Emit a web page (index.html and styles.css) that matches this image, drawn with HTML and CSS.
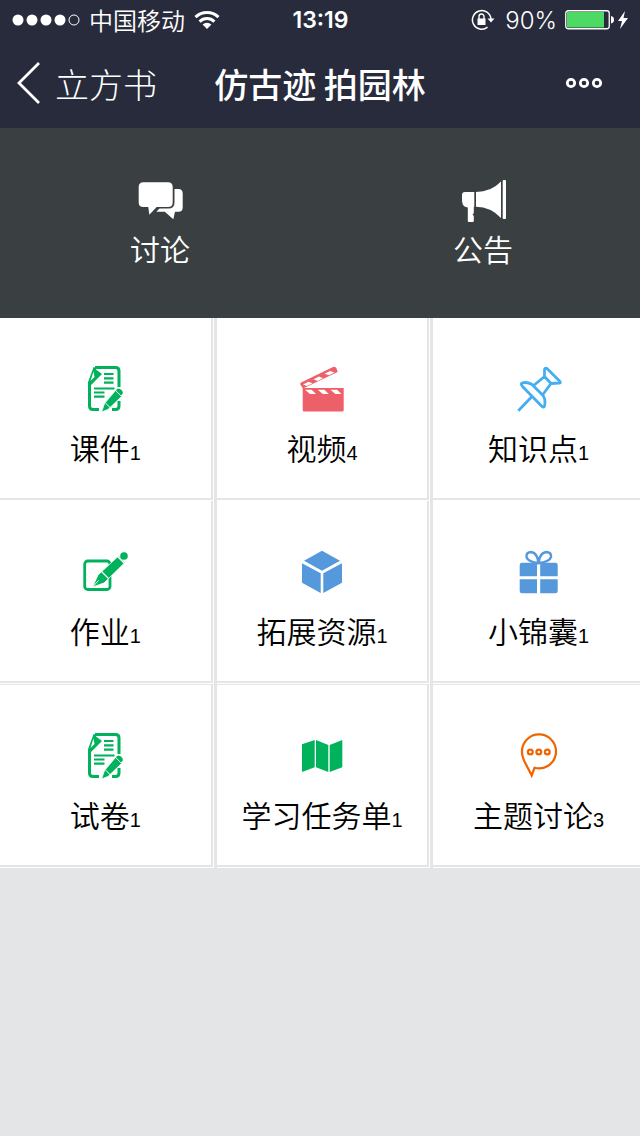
FILE: index.html
```html
<!DOCTYPE html>
<html lang="zh-CN">
<head>
<meta charset="utf-8">
<meta name="viewport" content="width=device-width, initial-scale=1">
<title>仿古迹 拍园林</title>
<link rel="stylesheet" href="styles.css">
</head>
<body>
<header class="top">
  <div class="status">
    <div class="status-left">
      <svg class="signal" width="68" height="12" viewBox="0 0 68 12" fill="#fff"><circle cx="6" cy="6" r="5.5"/><circle cx="20" cy="6" r="5.5"/><circle cx="34" cy="6" r="5.5"/><circle cx="48" cy="6" r="5.5"/><circle cx="62" cy="6" r="5" fill="none" stroke="#fff"/></svg>
      <span class="carrier">中国移动</span>
      <svg width="26" height="20" viewBox="0 0 26 20" fill="none" stroke="#fff" stroke-width="3"><path d="M1.500 7.200a16.500 16.500 0 0 1 23 0"/><path d="M5.600 11.600a10.500 10.500 0 0 1 14.800 0"/><path d="M13 19l-4.400-4.600a6.400 6.400 0 0 1 8.800 0z" fill="#fff" stroke="none"/></svg>
    </div>
    <time class="clock">13:19</time>
    <div class="status-right">
      <svg width="24" height="22" viewBox="0 0 24 22"><path d="M16.500 18.200A9.300 9.300 0 1 1 20 10" fill="none" stroke="#fff" stroke-width="1.500"/><path d="M16.500 9.500h7l-3.500 4z" fill="#fff"/><path d="M6.500 9.500h8v6.500h-8z" fill="#fff"/><path d="M8 10V7.500a2.500 2.500 0 0 1 5 0V10" fill="none" stroke="#fff" stroke-width="1.400"/></svg>
      <span class="percent">90%</span>
      <svg class="battery" width="50" height="20" viewBox="0 0 50 20"><rect x=".75" y=".75" width="43.500" height="18" rx="2.500" fill="none" stroke="#fff" stroke-width="1.300"/><rect x="2" y="2" width="37" height="15.500" fill="#4cd964"/><path d="M46 6q3 .5 3 3.800t-3 3.700z" fill="#fff"/></svg>
      <svg class="bolt" width="12" height="20" viewBox="0 0 12 20"><path d="M8 1L1 11h4L3 19l8-11H6.500z" fill="#fff"/></svg>
    </div>
  </div>
  <nav class="nav">
    <a class="back" href="#"><svg width="24" height="42" viewBox="0 0 24 42"><path d="M23 1L3 21l20 20" fill="none" stroke="#fff" stroke-width="2.800"/></svg><span>立方书</span></a>
    <h1 class="title">仿古迹 拍园林</h1>
    <button class="more" type="button" aria-label="更多"><svg width="38" height="12" viewBox="0 0 38 12" fill="none" stroke="#fff" stroke-width="2.800"><circle cx="6" cy="6" r="3.700"/><circle cx="19" cy="6" r="3.700"/><circle cx="32" cy="6" r="3.700"/></svg></button>
  </nav>
</header>
<main class="main">
  <section class="hero">
    <a class="hero-item" href="#">
      <svg class="icon" viewBox="0 0 48 48" fill="#fff"><path d="M7.500 6.300h24.500q4.700 0 4.700 4.700v15.500q0 4.500-4.700 4.500H20.700l-7.400 7.700-1-7.700H7.500q-4.800 0-4.800-4.500V11q0-4.700 4.800-4.700z"/><path d="M38.500 13h4q4.200 0 4.200 4.500v14q0 4.200-4.200 4.200h-3.500l-1.700 7.600-8.500-7.600h-8.500l3.200-3.200h9q6 0 6-6z"/></svg>
      <span>讨论</span>
    </a>
    <a class="hero-item" href="#">
      <svg class="icon" viewBox="0 0 48 48" fill="#fff"><path d="M6 16h9.300v14.700h-.5V37l-1.200 1.500 1.200 1.500v5q0 1-1 1h-4q-1 0-1-1V31.500L6 30.700Q3 29 3 24v-5q0-3 3-3z"/><path d="M17 16q15 0 25-10.500v36.500Q32 31 17 30.700z"/><rect x="43.700" y="4" width="3.300" height="39" rx="1"/></svg>
      <span>公告</span>
    </a>
  </section>
  <ul class="grid">
    <li class="cell"><a class="tile" href="#">
      <svg class="icon green" viewBox="0 0 48 48"><path d="M14 2.500h20.500q3.500 0 3.500 3.500v16M38 36v5q0 3.500-3.500 3.500H31M18 44.500h-6q-3.500 0-3.500-3.500V17.500L14 2.500" fill="none" stroke="currentColor" stroke-width="3"/><path d="M13 3l8 6L8 22V17l1.500-1 3-8z"/><path d="M12.500 6.500l-3 9.500 4-4z" fill="#fff"/><path d="M23 9h9.500M23 13.300h9.500M23 17.600h9.500M13 23.500h20.500M13 27.500h10.500M13 31.600h10.500" stroke="currentColor" stroke-width="2.200"/><path d="M34.500 25.500l6 6-13.500 13-6.500 2.500 3-8.500z" stroke="#fff" stroke-width=".8"/><path d="M36 24q2-1.500 4.500 1t.5 4.500l-1 1-5-5z"/><path d="M24.500 38l5 5" stroke="#fff"/></svg>
      <span class="label">课件<small>1</small></span></a></li>
    <li class="cell"><a class="tile" href="#">
      <svg class="icon red" viewBox="0 0 48 48"><path d="M4.700 23h41v22q0 1.500-1.500 1.500h-38q-1.500 0-1.500-1.500z"/><path d="M2 19l1-1.500L35 2q2.500-1 3.500 1.500l1.200 3.500L5 23.500z"/><path d="M7 24.700h6.700l4.300 4.300h-6zM19.700 24.700h6.700l4.300 4.300h-6zM32.400 24.700h6.700L43.400 29h-6zM5 19.500l5.500-2.700 4 1.500-5.500 2.700zM15.500 14.300l5.500-2.700 4 1.600-5.500 2.700zM26.500 8.700L32 6l4.500 1.600-5.500 2.700z" fill="#fff"/></svg>
      <span class="label">视频<small>4</small></span></a></li>
    <li class="cell"><a class="tile" href="#">
      <svg class="icon sky" viewBox="0 0 48 48" fill="none" stroke="currentColor" stroke-width="2.800" stroke-linejoin="round"><path d="M32 3.500L45 16.500q1 1.500-1 1.500l-8 .5-6.500-7V4.500q.5-2 2.500-1zM29.500 11.500L18 21M36 18.500L27.500 30M7 18q5-1.500 10 1.500L28 30.500q3 4 1.500 10.500-.5 2-2.500.500L7.500 21.500Q5.500 19 7 18zM17 31.500L3.300 45.700"/></svg>
      <span class="label">知识点<small>1</small></span></a></li>
    <li class="cell"><a class="tile" href="#">
      <svg class="icon green" viewBox="0 0 48 48"><rect x="3.700" y="13" width="25.300" height="28.500" rx="3" fill="none" stroke="currentColor" stroke-width="2.800"/><path d="M37.500 8l6.500 6.500-21 20.500-11.500 4 5.500-12z" stroke="#fff" stroke-width=".8"/><path d="M12.500 38l5-5.500" stroke="#fff"/><path d="M20.500 23.500l7 7M36.500 8.500l7 7" stroke="#fff" stroke-width="1.200"/><circle cx="43" cy="8" r="3.800"/></svg>
      <span class="label">作业<small>1</small></span></a></li>
    <li class="cell"><a class="tile" href="#">
      <svg class="icon blue" viewBox="0 0 48 48"><path d="M24 2.700l18 10-18 10-18-10zM4 15.300l18.700 10V45L4 34.700zM44 15.300l-18.700 10V45L44 34.700z"/></svg>
      <span class="label">拓展资源<small>1</small></span></a></li>
    <li class="cell"><a class="tile" href="#">
      <svg class="icon blue" viewBox="0 0 48 48"><path d="M7 14.700h15v13.600H4.700V17q0-2.300 2.300-2.300zM25.200 14.700h15q2.500 0 2.500 2.300v11.300H25.200zM4.700 31.300H22V45.200H7q-2.300 0-2.300-2.300zM25.200 31.300h17.500v11.600q0 2.300-2.500 2.300h-15z"/><path d="M23.500 15q-1-10-7-11-5.500 0-5 5 1.500 5 12 6zM23.500 15q1-10 7.500-11 5.500 0 5 5-1.500 5-12.500 6z" fill="none" stroke="currentColor" stroke-width="2.600"/></svg>
      <span class="label">小锦囊<small>1</small></span></a></li>
    <li class="cell ruled"><a class="tile" href="#">
      <svg class="icon green" viewBox="0 0 48 48"><path d="M14 2.500h20.500q3.500 0 3.500 3.500v16M38 36v5q0 3.500-3.500 3.500H31M18 44.500h-6q-3.500 0-3.500-3.500V17.500L14 2.500" fill="none" stroke="currentColor" stroke-width="3"/><path d="M13 3l8 6L8 22V17l1.500-1 3-8z"/><path d="M12.500 6.500l-3 9.500 4-4z" fill="#fff"/><path d="M23 9h9.500M23 13.300h9.500M23 17.600h9.500M13 23.500h20.500M13 27.500h10.500M13 31.600h10.500" stroke="currentColor" stroke-width="2.200"/><path d="M34.500 25.500l6 6-13.500 13-6.500 2.500 3-8.500z" stroke="#fff" stroke-width=".8"/><path d="M36 24q2-1.500 4.500 1t.5 4.500l-1 1-5-5z"/><path d="M24.500 38l5 5" stroke="#fff"/></svg>
      <span class="label">试卷<small>1</small></span></a></li>
    <li class="cell ruled"><a class="tile" href="#">
      <svg class="icon green" viewBox="0 0 48 48"><path d="M4 12.300L16.700 8v27.300L4 40zM18 8l12.300 5v27L18 35.300zM31.700 13l12.600-5v27.300L31.700 40z"/></svg>
      <span class="label">学习任务单<small>1</small></span></a></li>
    <li class="cell ruled"><a class="tile" href="#">
      <svg class="icon orange" viewBox="0 0 48 48" fill="none" stroke="currentColor" stroke-width="2.200"><path d="M16.700 43.500L9 28.500Q7 24 7 20a17 17 0 1 1 12.500 15.800z"/><circle cx="15.300" cy="20" r="2.400"/><circle cx="23.800" cy="20" r="2.400"/><circle cx="32.300" cy="20" r="2.400"/></svg>
      <span class="label">主题讨论<small>3</small></span></a></li>
  </ul>
</main>
</body>
</html>
```

FILE: styles.css
```css
* { box-sizing: border-box; }

body {
  margin: 0;
  min-height: 100vh;
  background: #e4e5e7;
  color: #000;
  font-family: "Liberation Sans", "Noto Sans CJK SC", sans-serif;
  font-weight: 350;
}

a { color: inherit; text-decoration: none; }
svg { display: block; flex: none; }

.top { background: #282b3c; color: #fff; }

.status {
  display: grid;
  grid-template-columns: 1fr auto 1fr;
  align-items: center;
  height: 40px;
  padding: 0 11px 0 12px;
}
.status-left, .status-right { display: flex; align-items: center; }
.status-left { gap: 9px; }
.status-right { justify-content: flex-end; gap: 8px; }
.carrier { font-family: "Noto Sans CJK SC", sans-serif; font-size: 24px; line-height: 40px; }
.clock { font-family: Inter, sans-serif; font-size: 23px; font-weight: 600; }
.percent { margin-left: 2px; font-family: Inter, sans-serif; font-size: 24px; font-weight: 300; }
.bolt { margin-left: -6px; }

.nav {
  display: grid;
  grid-template-columns: 1fr auto 1fr;
  align-items: center;
  height: 88px;
  padding: 0 16px 2px;
  font-family: "Noto Sans CJK SC", sans-serif;
  font-size: 34px;
  font-weight: 300;
}
.back { display: flex; align-items: center; gap: 15px; }
.title { margin: 0; font-size: 34px; font-weight: 500; }
.more {
  justify-self: end;
  margin-right: 21px;
  padding: 16px 0;
  border: 0;
  background: none;
}

.main { overflow: hidden; }

.hero {
  display: grid;
  grid-template-columns: 1fr 1fr;
  column-gap: 3px;
  margin-right: -3px;
  padding: 48px 0 45px;
  background: #3a3f42;
  color: #fff;
}
.hero-item {
  display: flex;
  flex-direction: column;
  align-items: center;
  gap: 5px;
  font-size: 30px;
  line-height: 44px;
}
.icon { width: 48px; height: 48px; fill: currentColor; }
.icon[fill="none"] { fill: none; }
.hero .icon { fill: #fff; }

/* The last column runs slightly past the right edge, hiding its rule. */
.grid {
  display: grid;
  grid-template-columns: repeat(3, 1fr);
  column-gap: 3px;
  margin: 0 -7px 0 0;
  padding: 0;
  list-style: none;
}
.cell { padding: 0 1px 1px 0; background: #fff; }
.ruled { border-top: 1px solid #e4e5e7; }
.tile {
  display: flex;
  flex-direction: column;
  align-items: center;
  gap: 12px;
  padding: 47px 0 29px;
  border: solid #e4e5e7;
  border-width: 0 2px 2px 0;
}
.label {
  font-family: "Noto Sans CJK SC", sans-serif;
  font-size: 30px;
  line-height: 44px;
  white-space: nowrap;
}
.label small { font-family: "Liberation Sans", sans-serif; font-size: 20px; line-height: 1; }

.green { color: #00b25c; }
.red { color: #ee6069; }
.sky { color: #44aef5; }
.blue { color: #5599dc; }
.orange { color: #ee6500; }
```
